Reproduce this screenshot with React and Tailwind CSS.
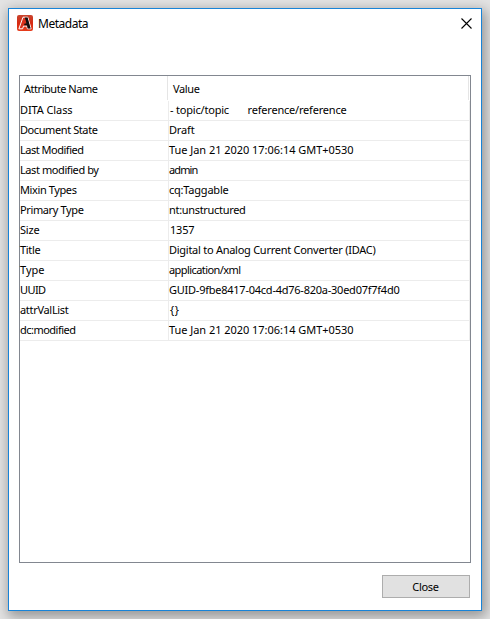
const rows = [
  ["DITA Class", 52, "- topic/topic       reference/reference", 176],
  ["Document State", 77, "Draft", 25],
  ["Last Modified", 63, "Tue Jan 21 2020 17:06:14 GMT+0530", 184],
  ["Last modified by", 78, "admin", 28],
  ["Mixin Types", 56, "cq:Taggable", 59],
  ["Primary Type", 63, "nt:unstructured", 76],
  ["Size", 19, "1357", 24],
  ["Title", 20, "Digital to Analog Current Converter (IDAC)", 206],
  ["Type", 24, "application/xml", 71],
  ["UUID", 25, "GUID-9fbe8417-04cd-4d76-820a-30ed07f7f4d0", 230],
  ["attrValList", 48, "{}", 9],
  ["dc:modified", 55, "Tue Jan 21 2020 17:06:14 GMT+0530", 184],
];

// Spreads the letters so that the label takes the given width.
function Label({ text, width, className = "" }) {
  const fit = (el) => {
    if (!el) return;
    el.style.letterSpacing = "0px";
    const natural = el.getBoundingClientRect().width;
    el.style.letterSpacing = `${(width + 0.5 - natural) / text.length}px`;
  };
  return (
    <span ref={fit} className={`inline-block whitespace-pre ${className}`}>
      {text}
    </span>
  );
}

function AppIcon() {
  return (
    <svg width="16" height="16" viewBox="0 0 16 16" className="shrink-0">
      <defs>
        <linearGradient id="red" x1="0" y1="0" x2="0" y2="1">
          <stop offset="0" stopColor="#c8452f" />
          <stop offset="0.5" stopColor="#d62a12" />
          <stop offset="1" stopColor="#e63c1c" />
        </linearGradient>
      </defs>
      <rect width="16" height="16" rx="2" fill="url(#red)" />
      <path d="M1.9 13.8 6 2.2h4.8l3.3 11.6h-3.7l-.6-2.7H6.5l-.9 2.7Z" fill="#d9301a" stroke="#fff" strokeWidth="1" strokeLinejoin="round" />
      <path d="M7.7 2.6h2.9l3 10.8h-2.9l-.7-3.1H7l.6-1.8h1.8L8.6 5Z" fill="#111" />
    </svg>
  );
}

export default function App() {
  return (
    <div className="h-[619px] w-[490px] overflow-hidden bg-[#e4e4e4] p-2 font-['Noto_Sans',sans-serif] text-[11px] leading-[17px] text-black">
      <div className="flex h-[603px] w-[474px] flex-col border border-[#1883d7] bg-white shadow-[2px_4px_12px_2px_rgba(0,0,0,0.34)]">
        <header className="flex h-[66px] items-start justify-between pt-[6px] pr-[9px] pl-2">
          <div className="flex items-start gap-[5px]">
            <AppIcon />
            <Label text="Metadata" width={49.5} className="mt-px text-[12px] leading-4" />
          </div>
          <svg width="11" height="11" viewBox="0 0 11 11" className="mt-[3px]">
            <path d="M.5.5l10 10M10.5.5l-10 10" stroke="#000" strokeWidth="1.1" />
          </svg>
        </header>
        <main className="ml-[10px] h-[488px] w-[452px] border border-[#828790]">
          <div className="flex h-[25px]">
            <div className="h-6 w-[148px] border-r border-[#e5e5e5] pt-1 pl-1">
              <Label text="Attribute Name" width={73} />
            </div>
            <div className="h-6 w-[301px] border-r border-[#e5e5e5] pt-1 pl-[5px]">
              <Label text="Value" width={26} />
            </div>
          </div>
          {rows.map(([name, nameWidth, value, valueWidth]) => (
            <div key={name} className="flex h-5 border-b border-[#ececec]">
              <div className="w-[149px] border-r border-[#ececec]">
                <Label text={name} width={nameWidth} />
              </div>
              <div className={`flex-1 border-r border-[#ececec] ${["-", "1", "{"].includes(value[0]) ? "pl-px" : ""}`}>
                <Label text={value} width={valueWidth} />
              </div>
            </div>
          ))}
        </main>
        <button className="mt-3 mr-[11px] flex h-[23px] w-[88px] items-center justify-center self-end border border-[#adadad] bg-[#e1e1e1] pr-px pb-px">
          <Label text="Close" width={26} />
        </button>
      </div>
    </div>
  );
}
